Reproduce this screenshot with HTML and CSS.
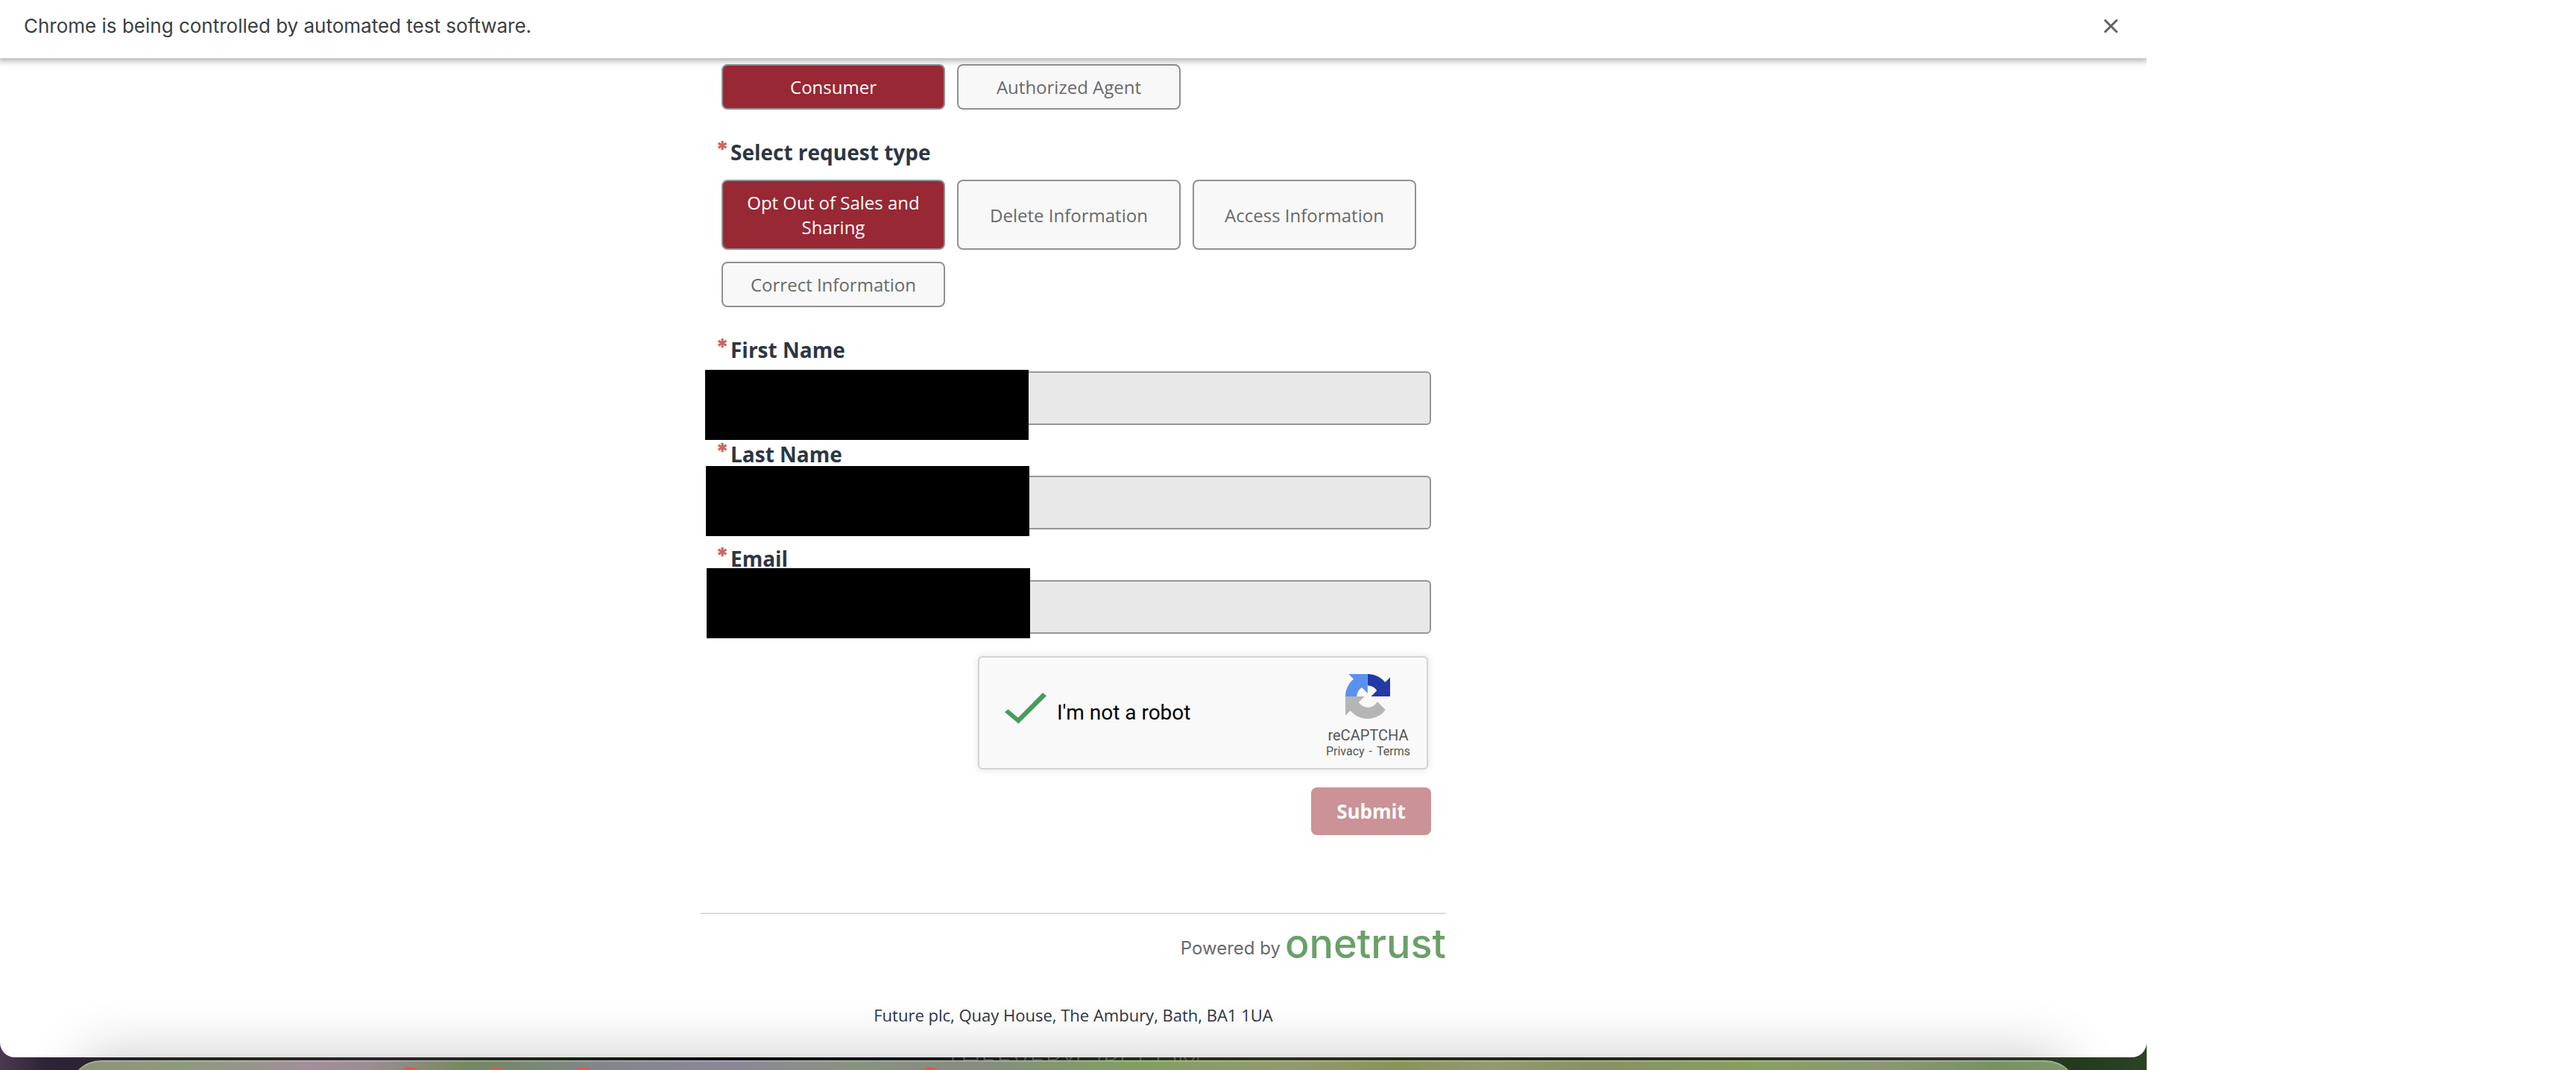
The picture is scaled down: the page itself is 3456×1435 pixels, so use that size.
FILE: index.html
```html
<!DOCTYPE html>
<html lang="en">
<head>
<meta charset="utf-8">
<title>Privacy request</title>
<link rel="stylesheet" href="styles.css">
</head>
<body>
<div class="desktop">
  <div class="window">
    <header class="infobar">
      <span>Chrome is being controlled by automated test software.</span>
      <button class="infobar-close" type="button" aria-label="Close">
        <svg width="18" height="18" viewBox="0 0 18 18"><path d="M1.5 1.5l15 15M16.5 1.5l-15 15" fill="none" stroke="#5f6368" stroke-width="3" stroke-linecap="round"/></svg>
      </button>
    </header>

    <main class="page">
      <form class="request">
        <div class="choices">
          <button class="choice selected" type="button">Consumer</button>
          <button class="choice" type="button">Authorized Agent</button>
        </div>

        <h2 class="label"><span class="star">*</span>Select request type</h2>
        <div class="choices">
          <button class="choice selected" type="button">Opt Out of Sales and Sharing</button>
          <button class="choice" type="button">Delete Information</button>
          <button class="choice" type="button">Access Information</button>
          <button class="choice" type="button">Correct Information</button>
        </div>

        <div class="fields">
          <div class="field">
            <label class="label" for="first"><span class="star">*</span>First Name</label>
            <input id="first" type="text" readonly>
            <span class="redacted redacted-first"></span>
          </div>
          <div class="field">
            <label class="label" for="last"><span class="star">*</span>Last Name</label>
            <input id="last" type="text" readonly>
            <span class="redacted redacted-last"></span>
          </div>
          <div class="field">
            <label class="label" for="email"><span class="star">*</span>Email</label>
            <input id="email" type="email" readonly>
            <span class="redacted redacted-email"></span>
          </div>
        </div>

        <div class="captcha">
          <label class="captcha-check"><input type="checkbox" checked>I'm not a robot</label>
          <div class="captcha-brand">
            <svg width="60" height="60" viewBox="0 0 64 64">
              <defs>
                <clipPath id="right-half"><rect x="32" y="0" width="32" height="32"/></clipPath>
                <clipPath id="top-half"><rect x="0" y="0" width="32" height="32"/></clipPath>
              </defs>
              <path clip-path="url(#right-half)" fill="#2339a5" d="M64 31.955l-.033-1.37V4.687l-7.16 7.16C50.948 4.674 42.033.093 32.05.093c-10.4 0-19.622 4.96-25.458 12.64l11.736 11.86a15.55 15.55 0 0 1 4.754-5.334c2.05-1.6 4.952-2.906 8.968-2.906.485 0 .86.057 1.135.163 4.976.393 9.288 3.14 11.828 7.124l-8.307 8.307L64 31.953"/>
              <path clip-path="url(#top-half)" fill="#5c90f0" d="M31.862.094l-1.37.033H4.594l7.16 7.16C4.58 13.147 0 22.06 0 32.046c0 10.4 4.96 19.622 12.64 25.458L24.5 45.768a15.55 15.55 0 0 1-5.334-4.754c-1.6-2.05-2.906-4.952-2.906-8.968 0-.485.057-.86.163-1.135.393-4.976 3.14-9.288 7.124-11.828l8.307 8.307L31.86.095"/>
              <path fill="#b5b5b5" d="M.001 32.045l.033 1.37v25.898l7.16-7.16c5.86 7.173 14.774 11.754 24.76 11.754 10.4 0 19.622-4.96 25.458-12.64l-11.736-11.86a15.55 15.55 0 0 1-4.754 5.334c-2.05 1.6-4.952 2.906-8.968 2.906-.485 0-.86-.057-1.135-.163-4.976-.393-9.288-3.14-11.828-7.124l8.307-8.307c-10.522.04-22.4.066-27.295-.005"/>
            </svg>
            <span class="captcha-name">reCAPTCHA</span>
            <span class="captcha-links"><a href="#">Privacy</a><span>-</span><a href="#">Terms</a></span>
          </div>
        </div>

        <button class="submit" type="submit">Submit</button>
      </form>

      <footer class="footer">
        <div class="powered">Powered by <a class="onetrust" href="#">onetrust</a></div>
        <p class="address">Future plc, Quay House, The Ambury, Bath, BA1 1UA</p>
      </footer>
    </main>
    <div class="dock-shadow"></div>
  </div>

  <div class="wallpaper">
    <span class="watermark">THEEVERYGIRL.COM</span>
  </div>
  <div class="dock-area">
    <div class="dock">
      <span class="badge badge-a"></span>
      <span class="badge badge-b"></span>
      <span class="badge badge-c"></span>
      <span class="badge badge-d"></span>
    </div>
  </div>
</div>
</body>
</html>
```
FILE: styles.css
```css
* {
  box-sizing: border-box;
}

body {
  margin: 0;
  background: #fff;
  color: #2c3643;
  font-family: "Open Sans", sans-serif;
}

button,
input {
  margin: 0;
  font-family: inherit;
}

.desktop {
  width: 83.3333%;
  background: linear-gradient(90deg, #4a3a50 0%, #2f2438 2%, #26202c 6%, #1f2a14 12%, #2a2630 18%, #1a2410 26%, #0b0d08 34%, #15161c 43%, #232d16 52%, #2c2c18 60%, #1f2613 72%, #2a2c1e 85%, #352f2c 92%, #24381c 96%, #2a4424 100%);
}

.window {
  position: relative;
  overflow: hidden;
  background: #fff;
  border-radius: 0 0 20px 20px;
}

/* Browser notice bar */
.infobar {
  position: relative;
  z-index: 1;
  display: flex;
  align-items: center;
  justify-content: space-between;
  height: 78px;
  padding: 0 39px 8px 32px;
  background: #fff;
  box-shadow: 0 2px 8px 2px rgba(60, 70, 65, 0.4);
  color: #3c4043;
  font-family: Inter, sans-serif;
  font-size: 26px;
  line-height: 32px;
}

.infobar-close {
  display: flex;
  padding: 0;
  border: 0;
  background: none;
}

.page {
  max-width: 1000px;
  margin: 0 auto;
  padding: 8px 0 42px;
}

.request {
  display: flex;
  flex-direction: column;
  padding: 0 20px;
}

.choices {
  display: grid;
  grid-template-columns: repeat(3, 300px);
  gap: 16px;
  padding-left: 8px;
}

.choice {
  padding: 12px;
  border: 2px solid #919191;
  border-radius: 8px;
  background: #f8f8f8;
  color: #696969;
  font-size: 24px;
  line-height: 33px;
}

.choice.selected {
  background: #982834;
  color: #fff;
}

.label {
  display: flex;
  margin: 0;
  font-size: 28px;
  font-weight: 700;
  line-height: 38px;
}

h2.label {
  padding: 38px 0 18px;
  box-sizing: content-box;
}

.star {
  width: 20px;
  color: #cd6760;
  font-family: Inter, sans-serif;
  font-size: 30px;
  font-weight: 900;
  line-height: 30px;
}

.fields {
  display: flex;
  flex-direction: column;
  gap: 20px;
  padding-top: 38px;
}

.field {
  position: relative;
  display: flex;
  flex-direction: column;
  gap: 10px;
}

.field input {
  width: 100%;
  height: 72px;
  padding: 0 20px;
  border: 2px solid #969696;
  border-radius: 6px;
  background: #e8e8e8;
  font-size: 24px;
}

.redacted {
  position: absolute;
  width: 434px;
  height: 94px;
  background: #000;
}

.redacted-first {
  top: 46px;
  left: -14px;
}

.redacted-last {
  top: 35px;
  left: -13px;
}

.redacted-email {
  top: 32px;
  left: -12px;
}

/* Captcha widget */
.captcha {
  display: flex;
  align-items: center;
  justify-content: space-between;
  align-self: flex-end;
  width: 604px;
  height: 152px;
  margin: 30px 4px 24px 0;
  padding: 0 22px 0 34px;
  border: 2px solid #d3d3d3;
  border-radius: 6px;
  background: #f9f9f9;
  box-shadow: 0 0 8px 2px rgba(0, 0, 0, 0.08);
  font-family: Roboto, sans-serif;
}

.captcha-check {
  display: flex;
  align-items: center;
  gap: 14px;
  color: #000;
  font-size: 28px;
  line-height: 34px;
}

.captcha-check input {
  width: 56px;
  height: 54px;
  appearance: none;
  background: #479c5c;
  clip-path: polygon(0 48%, 8% 41%, 32% 62%, 91% 0, 100% 8%, 33% 77%);
}

.captcha-brand {
  display: flex;
  flex-direction: column;
  align-items: center;
  padding-top: 10px;
  color: #555;
}

.captcha-name {
  padding-top: 10px;
  font-size: 20px;
  line-height: 24px;
}

.captcha-links {
  display: flex;
  gap: 6px;
  font-size: 16px;
  line-height: 20px;
}

.captcha-links a {
  color: inherit;
  text-decoration: none;
}

.submit {
  align-self: flex-end;
  width: 161px;
  height: 64px;
  padding: 0;
  border: 0;
  border-radius: 8px;
  background: #cb9297;
  color: #fff;
  font-size: 26px;
  font-weight: 700;
}

/* Footer */
.footer {
  margin-top: 104px;
  border-top: 2px solid #dadada;
}

.powered {
  display: flex;
  align-items: flex-start;
  justify-content: flex-end;
  gap: 6px;
  height: 120px;
  color: #696969;
  font-family: Inter, sans-serif;
  font-size: 24px;
  line-height: 92px;
}

.onetrust {
  color: #6aa068;
  font-size: 54px;
  font-weight: 500;
  line-height: 80px;
  text-decoration: none;
}

.address {
  margin: 0;
  font-size: 22px;
  line-height: 30px;
  text-align: center;
}

/* Shadow that the dock casts on the window above it */
.dock-shadow {
  position: absolute;
  top: 100%;
  right: 112px;
  left: 112px;
  height: 120px;
  box-shadow: 0 0 76px rgba(0, 0, 0, 0.23);
}

.wallpaper {
  height: 4px;
  overflow: hidden;
  text-align: center;
}

.watermark {
  display: block;
  color: rgba(255, 255, 255, 0.3);
  font-family: Lato, sans-serif;
  font-size: 36px;
  font-weight: 300;
  line-height: 4px;
}

.dock-area {
  height: 13px;
  padding: 0 92px;
  overflow: hidden;
}

.dock {
  position: relative;
  height: 120px;
  border-radius: 44px;
  border-top: 2px solid rgba(255, 255, 255, 0.25);
  background: linear-gradient(90deg, #8e9378 0%, #8c9a7e 6%, #a58d9b 12%, #9b8c92 15%, #73895f 20%, #80868a 26%, #8c869b 33%, #87937f 39%, #858c80 45%, #80a062 53%, #919a6a 61%, #88945a 66%, #94996f 71%, #869262 76%, #86a060 84%, #8b9778 90%, #769261 96%, #809b6b 100%);
}

.badge {
  position: absolute;
  top: 7px;
  width: 32px;
  height: 32px;
  border-radius: 50%;
  background: #ee5540;
}

.badge-a {
  left: 16.4%;
}

.badge-b {
  left: 20.7%;
}

.badge-c {
  left: 25%;
}

.badge-d {
  left: 42.3%;
}
```
